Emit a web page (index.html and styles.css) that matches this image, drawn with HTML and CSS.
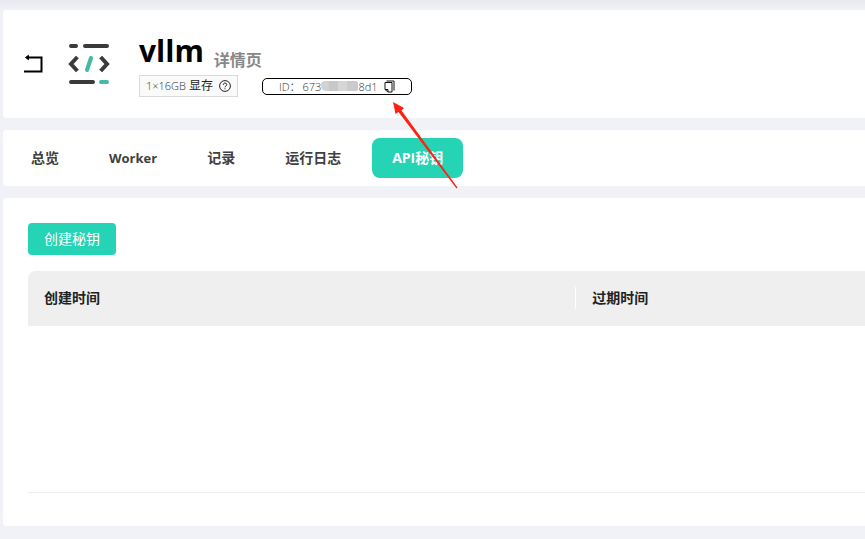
FILE: index.html
```html
<!DOCTYPE html>
<html lang="zh-CN">
<head>
<meta charset="utf-8">
<title>vllm 详情页</title>
<link rel="stylesheet" href="styles.css">
</head>
<body>
<main class="page">
  <header class="card header">
    <button class="icon-button back" type="button" aria-label="返回">
      <svg width="20" height="22" viewBox="0 0 20 22" fill="none" stroke="#000" stroke-width="2"><path d="M4 4.500H18.500V18.500H1"/><path d="M2.500 4.500 5.500 2.300V6.700Z" fill="#000" stroke-width="1"/></svg>
    </button>
    <svg class="logo" width="42" height="42" viewBox="0 0 42 42" fill="none" stroke="#3a3a3a" stroke-width="4" stroke-linecap="round" stroke-linejoin="round">
      <path d="M3 3H8M17 3H39M3 39H25"/>
      <path d="M8 15.500 3 21 8 26.500M34 15.500 39 21 34 26.500" stroke-linecap="square" stroke-linejoin="miter"/>
      <path d="M23 15 19 27M33 39H39" stroke="#45b9a5"/>
    </svg>
    <div class="summary">
      <div class="heading"><h1>vllm</h1><span class="subtitle">详情页</span></div>
      <div class="meta">
        <span class="spec"><span class="spec-size">1×16GB</span> 显存
          <svg width="12" height="12" viewBox="0 0 12 12" fill="none" stroke="#222"><circle cx="6" cy="6" r="5.400"/><path d="M4.300 4.800C4.300 2.400 7.800 2.500 7.800 4.700 7.800 5.900 6 5.900 6 7.300M6 8.300V9.300"/></svg>
        </span>
        <span class="identifier"><span>ID：</span><span class="id-value">673<span class="mask"></span>8d1</span>
          <button class="icon-button copy" type="button" aria-label="复制 ID">
            <svg width="11" height="13" viewBox="0 0 11 13" fill="none" stroke="#111"><path d="M2.500 1H10V10.500" /><path d="M1 2.500H8V12H4L1 9.500ZM1 9.500H4V12"/></svg>
          </button>
        </span>
      </div>
    </div>
  </header>
  <nav class="card tabs">
    <a href="#overview">总览</a>
    <a class="latin" href="#worker">Worker</a>
    <a href="#records">记录</a>
    <a href="#logs">运行日志</a>
    <a class="active" href="#keys" aria-current="page">API秘钥</a>
  </nav>
  <section class="card content">
    <button class="create" type="button">创建秘钥</button>
    <table>
      <thead><tr><th class="created" scope="col">创建时间</th><th scope="col">过期时间</th></tr></thead>
      <tbody><tr><td colspan="2"></td></tr></tbody>
    </table>
  </section>
  <svg class="pointer" width="68" height="90" viewBox="0 0 68 90" fill="#ff2213" aria-hidden="true"><path d="M3 2 14 8 11.500 10.500 67.500 87.500 66.500 88.500 8.500 12 5.500 14Z"/></svg>
</main>
</body>
</html>
```
FILE: styles.css
```css
* { box-sizing: border-box; }
body {
  margin: 0;
  min-height: 100vh;
  background: linear-gradient(#e8e9ef, #f1f2f8 10px);
  color: #222;
  font: 14px/20px "Open Sans", "Noto Sans CJK SC", sans-serif;
}
button { border: 0; padding: 0; font: inherit; cursor: pointer; }
svg { display: block; flex: none; }
.page {
  position: relative;
  display: flex;
  flex-direction: column;
  gap: 12px;
  padding: 10px 0 12px 3px;
}
.card { background: #fff; border-radius: 4px 0 0 4px; }
.header {
  display: flex;
  align-items: center;
  padding: 21px 20px;
}
.icon-button { background: none; color: inherit; }
.logo { margin-left: 25px; }
.summary { margin-left: 29px; }
.heading { display: flex; align-items: flex-end; height: 44px; gap: 10px; padding-bottom: 4px; }
h1 { margin: 0; color: #000; font-size: 30px; line-height: 40px; font-weight: 700; }
.subtitle { color: #888; font-size: 16px; line-height: 22px; font-weight: 700; }
.meta { display: flex; align-items: center; gap: 24px; }
.spec {
  display: flex;
  align-items: center;
  gap: 3px;
  height: 22px;
  padding: 0 6px;
  border: 1px solid #d9d9d9;
  background: #fafafa;
  font-size: 12px;
}
.spec svg { margin-left: 3px; }
.spec-size, .identifier { color: #333; font-size: 11px; font-weight: 300; }
.identifier {
  display: flex;
  align-items: center;
  height: 17px;
  padding: 0 16px;
  border: 1px solid #000;
  border-radius: 5px;
  line-height: 15px;
}
.id-value { display: flex; align-items: center; margin-left: 2px; }
.mask {
  width: 37px;
  height: 10px;
  border-radius: 4px 2px 2px 5px;
  background: linear-gradient(90deg, #d2d2d2 0 22%, #c8c8c8 22% 45%, #d6d6d6 45% 70%, #cacaca 70%);
}
.copy { margin-left: 7px; }
.tabs {
  display: flex;
  align-items: center;
  gap: 12px;
  padding: 8px 9px;
}
.tabs a {
  padding: 10px 19px;
  border-radius: 8px;
  color: #404040;
  font-size: 14px;
  font-weight: 700;
  text-decoration: none;
  white-space: nowrap;
}
.tabs .latin { font-size: 13px; }
.tabs .active { padding: 10px 20px; background: #25d3b5; color: #fff; }
.content { padding: 25px 0 33px 25px; }
.create {
  display: block;
  height: 32px;
  margin-bottom: 16px;
  padding: 0 16px;
  border-radius: 4px;
  background: #25d3b5;
  color: #fff;
}
table { width: 100%; border-spacing: 0; table-layout: fixed; }
th {
  position: relative;
  height: 55px;
  padding: 0 16px 2px;
  background: #efefef;
  text-align: left;
  font-weight: 700;
}
.created { width: 65.5%; border-radius: 8px 0 0; }
.created::after {
  content: "";
  position: absolute;
  top: 16px;
  right: 0;
  width: 1px;
  height: 22px;
  background: #fff;
}
td { height: 167px; padding: 0; border-bottom: 1px solid #ececec; }
.pointer { position: absolute; left: 390px; top: 100px; pointer-events: none; }
```
